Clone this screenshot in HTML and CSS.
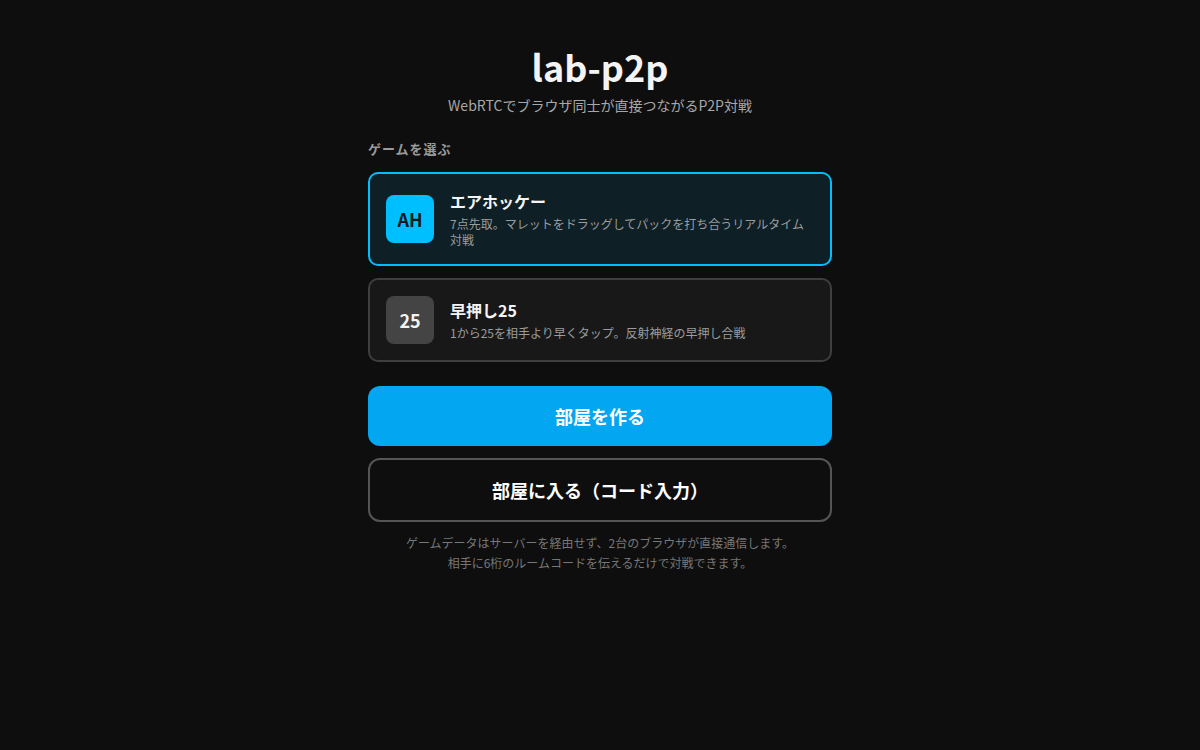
FILE: index.html
```html
<!DOCTYPE html>
<html lang="ja">
<head>
<meta charset="utf-8">
<title>lab-p2p</title>
<link rel="stylesheet" href="styles.css">
</head>
<body>
<main class="wrap">
  <h1 class="title">lab-p2p</h1>
  <p class="subtitle">WebRTCでブラウザ同士が直接つながるP2P対戦</p>
  <h2 class="section-label">ゲームを選ぶ</h2>
  <div class="games">
    <div class="game selected">
      <div class="game-icon icon-ah">AH</div>
      <div class="game-text">
        <div class="game-name">エアホッケー</div>
        <div class="game-desc">7点先取。マレットをドラッグしてパックを打ち合うリアルタイム対戦</div>
      </div>
    </div>
    <div class="game">
      <div class="game-icon icon-25">25</div>
      <div class="game-text">
        <div class="game-name">早押し25</div>
        <div class="game-desc">1から25を相手より早くタップ。反射神経の早押し合戦</div>
      </div>
    </div>
  </div>
  <button class="btn btn-primary">部屋を作る</button>
  <button class="btn btn-outline">部屋に入る（コード入力）</button>
  <p class="note">ゲームデータはサーバーを経由せず、2台のブラウザが直接通信します。<br>相手に6桁のルームコードを伝えるだけで対戦できます。</p>
</main>
</body>
</html>
```

FILE: styles.css
```css
html, body {
  margin: 0;
  padding: 0;
  background: #0e0e0e;
  color: #f2f2f2;
  font-family: "Noto Sans CJK JP", "Noto Sans", sans-serif;
}
.wrap {
  width: 464px;
  margin: 0 auto;
  padding-top: 44px;
  display: flex;
  flex-direction: column;
}
.title {
  margin: 0;
  text-align: center;
  font-size: 36px;
  line-height: 44px;
  font-weight: 700;
  color: #f4f4f4;
}
.subtitle {
  margin: 7px 0 0;
  text-align: center;
  font-size: 14px;
  line-height: 20px;
  color: #a8a8a8;
}
.section-label {
  margin: 25px 0 0;
  font-size: 13px;
  line-height: 18px;
  font-weight: 700;
  letter-spacing: 1px;
  color: #9a9a9a;
}
.games {
  margin-top: 14px;
  display: flex;
  flex-direction: column;
  gap: 12px;
}
.game {
  display: flex;
  align-items: center;
  gap: 16px;
  padding: 16px;
  border: 2px solid #3e3e3e;
  border-radius: 10px;
  background: #181818;
}
.game.selected {
  border-color: #00bfff;
  background: #0e1f26;
}
.game-icon {
  flex: 0 0 48px;
  width: 48px;
  height: 48px;
  border-radius: 8px;
  display: flex;
  align-items: center;
  justify-content: center;
  font-size: 18px;
  font-weight: 700;
}
.icon-ah {
  background: #00bfff;
  color: #0b1a20;
}
.icon-25 {
  background: #444444;
  color: #f2f2f2;
}
.game-text {
  display: flex;
  flex-direction: column;
  gap: 4px;
}
.game-name {
  font-size: 16px;
  line-height: 22px;
  font-weight: 700;
  color: #f4f4f4;
}
.game-desc {
  font-size: 12px;
  line-height: 16px;
  color: #9c9c9c;
}
.btn {
  display: block;
  width: 100%;
  font-family: inherit;
  font-size: 18px;
  line-height: 24px;
  font-weight: 700;
  color: #ffffff;
  padding: 18px;
  border-radius: 12px;
  cursor: pointer;
}
.btn-primary {
  margin-top: 24px;
  border: none;
  background: #03a6f0;
}
.btn-outline {
  margin-top: 12px;
  background: transparent;
  border: 2px solid #555555;
}
.note {
  margin: 11px 0 0;
  text-align: center;
  font-size: 12px;
  line-height: 20px;
  color: #777777;
}
```
